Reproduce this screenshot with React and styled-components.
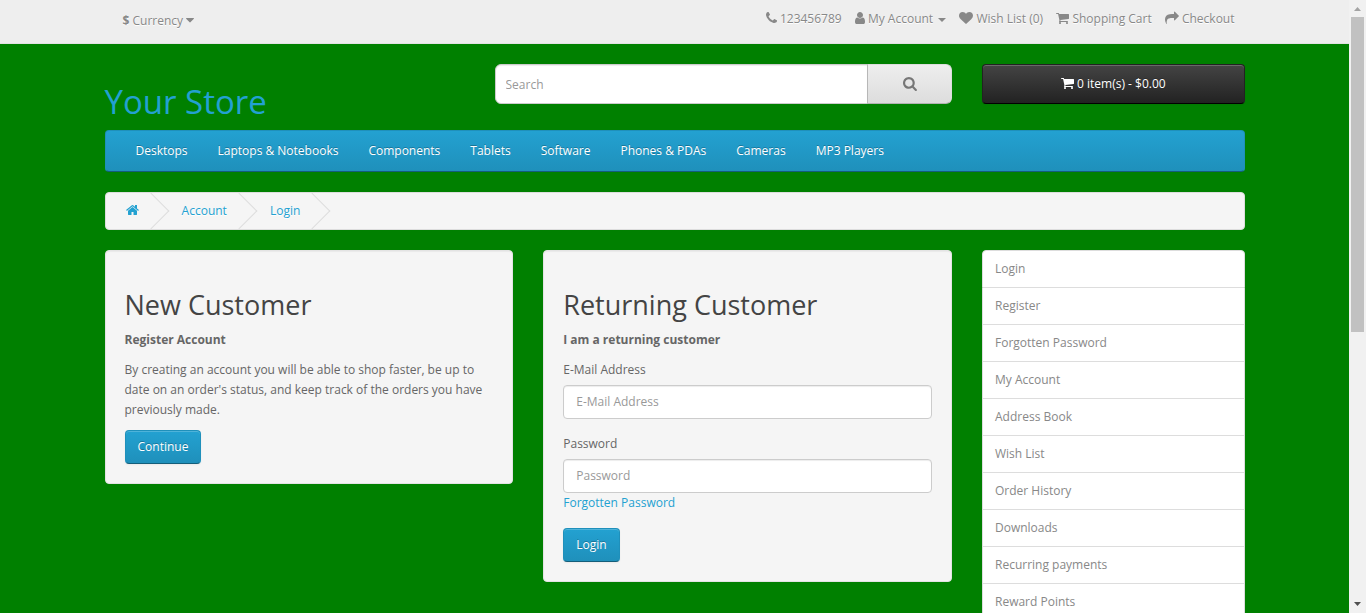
import React from "react";
import styled, { createGlobalStyle } from "styled-components";

const GlobalStyle = createGlobalStyle`
  *, *::before, *::after { box-sizing: border-box; }
  html, body { margin: 0; height: 100%; overflow: hidden; }
  body {
    background: #008000;
    color: #666;
    font: 400 12px/20px "Open Sans", "Liberation Sans", sans-serif;
  }
  a { color: #23a1d1; text-decoration: none; }
  p { margin: 0 0 10px; }
  input, button { font-family: inherit; }
`;

const glyphs = {
  phone: [192, 1408, "M1600 1240q0 27-10 70.5t-21 68.5q-21 50-122 106-94 51-186 51-27 0-53-3.5t-57.5-12.5-47-14.5-55.5-20.5-49-18q-98-35-175-83-127-79-264-216t-216-264q-48-77-83-175-3-9-18-49t-20.5-55.5-14.5-47-12.5-57.5-3.5-53q0-92 51-186 56-101 106-122 25-11 68.5-21t70.5-10q14 0 21 3 18 6 53 76 11 19 30 54t35 63.5 31 53.5q3 4 17.5 25t21.5 35.5 7 28.5q0 20-28.5 50t-62 55-62 53-28.5 46q0 9 5 22.5t8.5 20.5 14 24 11.5 19q76 137 174 235t235 174q2 1 19 11.5t24 14 20.5 8.5 22.5 5q18 0 46-28.5t53-62 55-62 50-28.5q14 0 28.5 7t35.5 21.5 25 17.5q25 15 53.5 31t63.5 35 54 30q70 35 76 53 3 7 3 21z"],
  user: [256, 1280, "M1536 1399q0 109-62.5 187t-150.5 78h-854q-88 0-150.5-78t-62.5-187q0-85 8.5-160.5t31.5-152 58.5-131 94-89 134.5-34.5q131 128 313 128t313-128q76 0 134.5 34.5t94 89 58.5 131 31.5 152 8.5 160.5zm-256-887q0 159-112.5 271.5t-271.5 112.5-271.5-112.5-112.5-271.5 112.5-271.5 271.5-112.5 271.5 112.5 112.5 271.5z"],
  heart: [0, 1792, "M896 1664q-26 0-44-18l-624-602q-10-8-27.5-26t-55.5-65.5-68-97.5-53.5-121-23.5-138q0-220 127-344t351-124q62 0 126.5 21.5t120 58 95.5 68.5 76 68q36-36 76-68t95.5-68.5 120-58 126.5-21.5q224 0 351 124t127 344q0 221-229 450l-623 600q-18 18-44 18z"],
  cart: [64, 1664, "M704 1536q0 52-38 90t-90 38-90-38-38-90 38-90 90-38 90 38 38 90zm896 0q0 52-38 90t-90 38-90-38-38-90 38-90 90-38 90 38 38 90zm128-1088v512q0 24-16.5 42.5t-40.5 21.5l-1044 122q13 60 13 70 0 16-24 64h920q26 0 45 19t19 45-19 45-45 19h-1024q-26 0-45-19t-19-45q0-11 8-31.5t16-36 21.5-40 15.5-29.5l-177-823h-204q-26 0-45-19t-19-45 19-45 45-19h256q16 0 28.5 6.5t19.5 15.5 13 24.5 8 26 5.5 29.5 4.5 26h1201q26 0 45 19t19 45z"],
  share: [0, 1792, "M1792 640q0 26-19 45l-512 512q-19 19-45 19t-45-19-19-45v-256h-224q-98 0-175.5 6t-154 21.5-133 42.5-105.5 69.5-80 101-48.5 138.5-17.5 181q0 55 5 123 0 6 2.5 23.5t2.5 26.5q0 15-8.5 25t-23.5 10q-16 0-28-17-7-9-13-22t-13.5-30-10.5-24q-127-285-127-451 0-199 53-333 162-403 875-403h224v-256q0-26 19-45t45-19 45 19l512 512q19 19 19 45z"],
  search: [64, 1664, "M1216 832q0-185-131.5-316.5t-316.5-131.5-316.5 131.5-131.5 316.5 131.5 316.5 316.5 131.5 316.5-131.5 131.5-316.5zm512 832q0 52-38 90t-90 38q-54 0-90-38l-343-342q-179 124-399 124-143 0-273.5-55.5t-225-150-150-225-55.5-273.5 55.5-273.5 150-225 225-150 273.5-55.5 273.5 55.5 225 150 150 225 55.5 273.5q0 220-124 399l343 343q37 37 37 90z"],
  home: [64, 1664, "M1472 992v480q0 26-19 45t-45 19h-384v-384h-256v384h-384q-26 0-45-19t-19-45v-480q0-1 .5-3t.5-3l575-474 575 474q1 2 1 6zm223-69l-62 74q-8 9-21 11h-3q-13 0-21-7l-692-577-692 577q-12 8-24 7-13-2-21-11l-62-74q-8-10-7-23.5t11-21.5l719-599q32-26 76-26t76 26l244 204v-195q0-14 9-23t23-9h192q14 0 23 9t9 23v408l219 182q10 8 11 21.5t-7 23.5z"],
  caret: [384, 1024, "M1408 704q0 26-19 45l-448 448q-19 19-45 19t-45-19l-448-448q-19-19-19-45t19-45 45-19h896q26 0 45 19t19 45z"],
};

const Glyph = styled.svg`
  fill: currentColor;
  vertical-align: -2px;
  overflow: visible;
`;

function Icon({ name, size = 14 }) {
  const [x, w, d] = glyphs[name];
  return (
    <Glyph viewBox={`${x} 0 ${w} 1792`} width={(w / 1792) * size} height={size} aria-hidden="true">
      <path d={d} />
    </Glyph>
  );
}

const Window = styled.div`
  display: flex;
  height: 613px;
  overflow: hidden;
`;

const Page = styled.div`
  flex: 1;
  min-width: 0;
`;

const Container = styled.div`
  width: 1170px;
  margin: 0 auto;
  padding: 0 ${(p) => p.$gutter ?? 15}px;
`;

const TopBar = styled.nav`
  height: 44px;
  margin-bottom: 20px;
  padding-top: 4px;
  background: #eee;
  border-bottom: 1px solid #e2e2e2;
  text-shadow: 0 1px 0 #fff;
  color: #888;
`;

const TopRow = styled(Container)`
  display: flex;
  justify-content: space-between;
`;

const CurrencyButton = styled.button`
  padding: 7px 13px;
  border: 0;
  background: none;
  color: #888;
  font-size: 12px;
  line-height: 20px;
  text-shadow: 0 1px 0 #fff;
`;

const TopLinks = styled.div`
  padding-top: 5px;
  white-space: nowrap;
`;

const TopLink = styled.span`
  display: inline-block;
  padding: 0 5px;
`;

const Caret = styled.span`
  display: inline-block;
  margin-left: 2px;
  vertical-align: middle;
  border-top: 4px solid;
  border-right: 4px solid transparent;
  border-left: 4px solid transparent;
`;

const Header = styled.header`
  display: grid;
  grid-template-columns: 360px 457.5px 262.5px;
  column-gap: 30px;
  height: 66px;
`;

const Logo = styled.h1`
  margin: 20px 0 0;
  font-size: 33px;
  font-weight: 400;
  line-height: 36px;
  color: #23a1d1;
`;

const SearchBox = styled.div`
  display: flex;
  height: 40px;
`;

const Field = styled.input`
  display: block;
  width: 100%;
  height: 34px;
  padding: 6px 12px;
  border: 1px solid #ccc;
  border-radius: 4px;
  background: #fff;
  box-shadow: inset 0 1px 1px rgba(0, 0, 0, 0.075);
  color: #555;
  font-size: 12px;
  line-height: 20px;
  &::placeholder { color: #999; opacity: 1; }
`;

const SearchField = styled(Field)`
  flex: 1;
  min-width: 0;
  height: 40px;
  padding: 0 10px;
  border-radius: 6px 0 0 6px;
`;

const SearchButton = styled.button`
  width: 85px;
  margin-left: -1px;
  padding: 0;
  border: 1px solid;
  border-color: #ddd #ddd #b3b3b3 #b7b7b7;
  border-radius: 0 6px 6px 0;
  background: linear-gradient(#eee, #ddd);
  color: #777;
  line-height: 20px;
`;

const CartButton = styled.button`
  height: 40px;
  border: 1px solid;
  border-color: #222 #222 #000;
  border-radius: 4px;
  background: linear-gradient(#444, #222);
  box-shadow: inset 0 1px 0 rgba(255, 255, 255, 0.2), 0 1px 2px rgba(0, 0, 0, 0.05);
  color: #fff;
  font-size: 12px;
  line-height: 18px;
  text-shadow: 0 -1px 0 rgba(0, 0, 0, 0.25);
`;

const Menu = styled.nav`
  display: flex;
  height: 42px;
  margin-bottom: 20px;
  padding: 0 15px;
  border: 1px solid;
  border-color: #1f90bb #1f90bb #145e7a;
  border-radius: 4px;
  background: linear-gradient(#23a1d1, #1f90bb);
`;

const MenuLink = styled.a`
  padding: 10px 15px;
  color: #fff;
  text-shadow: 0 -1px 0 rgba(0, 0, 0, 0.25);
`;

const Breadcrumb = styled.nav`
  display: flex;
  gap: 3.1px;
  height: 38px;
  margin-bottom: 20px;
  padding: 8px 0;
  border: 1px solid #ddd;
  border-radius: 4px;
  background: #f5f5f5;
  overflow: hidden;
`;

const Crumb = styled.a`
  position: relative;
  padding: 0 20px;
  text-shadow: 0 1px 0 #fff;
  &::after {
    content: "";
    position: absolute;
    top: -3px;
    right: -5px;
    width: 26px;
    height: 26px;
    border-right: 1px solid #ddd;
    border-bottom: 1px solid #ddd;
    transform: rotate(-45deg);
  }
`;

const Columns = styled.main`
  display: grid;
  grid-template-columns: 408.75px 408.75px 262.5px;
  justify-content: space-between;
  align-items: start;
`;

const Well = styled.section`
  padding: 19px;
  border: 1px solid #e3e3e3;
  border-radius: 4px;
  background: #f5f5f5;
  box-shadow: inset 0 1px 1px rgba(0, 0, 0, 0.05);
`;

const Title = styled.h2`
  margin: 20px 0 10px;
  color: #444;
  font-size: 27px;
  font-weight: 400;
  line-height: 1.1;
`;

const FormGroup = styled.div`
  margin-bottom: 15px;
`;

const Label = styled.label`
  display: block;
  margin-bottom: 5px;
`;

const PrimaryButton = styled.button`
  display: block;
  height: 34px;
  padding: 0 12px;
  border: 1px solid;
  border-color: #1f90bb #1f90bb #145e7a;
  border-radius: 4px;
  background: linear-gradient(#23a1d1, #1f90bb);
  box-shadow: inset 0 1px 0 rgba(255, 255, 255, 0.2), 0 1px 2px rgba(0, 0, 0, 0.05);
  color: #fff;
  font-size: 12px;
  line-height: 20px;
  text-shadow: 0 -1px 0 rgba(0, 0, 0, 0.25);
`;

const LinkList = styled.aside`
  display: flex;
  flex-direction: column;
`;

const ListLink = styled.a`
  padding: 8px 12px;
  border: 1px solid #ddd;
  background: #fff;
  color: #888;
  & + & { border-top: 0; }
  &:first-child { border-radius: 4px 4px 0 0; }
`;

const ScrollTrack = styled.div`
  display: flex;
  flex-direction: column;
  align-items: center;
  width: 17px;
  background: #f1f1f1;
`;

const ScrollArrow = styled.svg`
  width: 17px;
  height: 17px;
  fill: ${(p) => p.$color};
`;

const ScrollThumb = styled.div`
  width: 13px;
  height: 315px;
  margin-bottom: auto;
  background: #c1c1c1;
`;

const categories = ["Desktops", "Laptops & Notebooks", "Components", "Tablets", "Software", "Phones & PDAs", "Cameras", "MP3 Players"];
const accountLinks = ["Login", "Register", "Forgotten Password", "My Account", "Address Book", "Wish List", "Order History", "Downloads", "Recurring payments", "Reward Points"];

export default function App() {
  return (
    <Window>
      <GlobalStyle />
      <Page>
        <TopBar>
          <TopRow $gutter={20}>
            <CurrencyButton>
              <strong>$</strong> Currency <Icon name="caret" />
            </CurrencyButton>
            <TopLinks>
              <TopLink><Icon name="phone" /> 123456789</TopLink>{" "}
              <TopLink><Icon name="user" /> My Account <Caret /></TopLink>{" "}
              <TopLink><Icon name="heart" /> Wish List (0)</TopLink>{" "}
              <TopLink><Icon name="cart" /> Shopping Cart</TopLink>{" "}
              <TopLink><Icon name="share" /> Checkout</TopLink>
            </TopLinks>
          </TopRow>
        </TopBar>
        <Container>
          <Header>
            <Logo>Your Store</Logo>
            <SearchBox>
              <SearchField placeholder="Search" />
              <SearchButton aria-label="Search"><Icon name="search" size={15} /></SearchButton>
            </SearchBox>
            <CartButton><Icon name="cart" /> 0 item(s) - $0.00</CartButton>
          </Header>
          <Menu>
            {categories.map((name) => <MenuLink key={name}>{name}</MenuLink>)}
          </Menu>
          <Breadcrumb>
            <Crumb><Icon name="home" /></Crumb>
            <Crumb>Account</Crumb>
            <Crumb>Login</Crumb>
          </Breadcrumb>
          <Columns>
            <Well>
              <Title>New Customer</Title>
              <p><strong>Register Account</strong></p>
              <p>By creating an account you will be able to shop faster, be up to date on an order's status, and keep track of the orders you have previously made.</p>
              <PrimaryButton>Continue</PrimaryButton>
            </Well>
            <Well>
              <Title>Returning Customer</Title>
              <p><strong>I am a returning customer</strong></p>
              <FormGroup>
                <Label htmlFor="email">E-Mail Address</Label>
                <Field id="email" placeholder="E-Mail Address" />
              </FormGroup>
              <FormGroup>
                <Label htmlFor="password">Password</Label>
                <Field id="password" type="password" placeholder="Password" />
                <a>Forgotten Password</a>
              </FormGroup>
              <PrimaryButton>Login</PrimaryButton>
            </Well>
            <LinkList>
              {accountLinks.map((name) => <ListLink key={name}>{name}</ListLink>)}
            </LinkList>
          </Columns>
        </Container>
      </Page>
      <ScrollTrack>
        <ScrollArrow $color="#a3a3a3" viewBox="0 0 17 17"><path d="M5 11h7L8.5 7z" /></ScrollArrow>
        <ScrollThumb />
        <ScrollArrow $color="#505050" viewBox="0 0 17 17"><path d="M5 6h7L8.5 10z" /></ScrollArrow>
      </ScrollTrack>
    </Window>
  );
}
